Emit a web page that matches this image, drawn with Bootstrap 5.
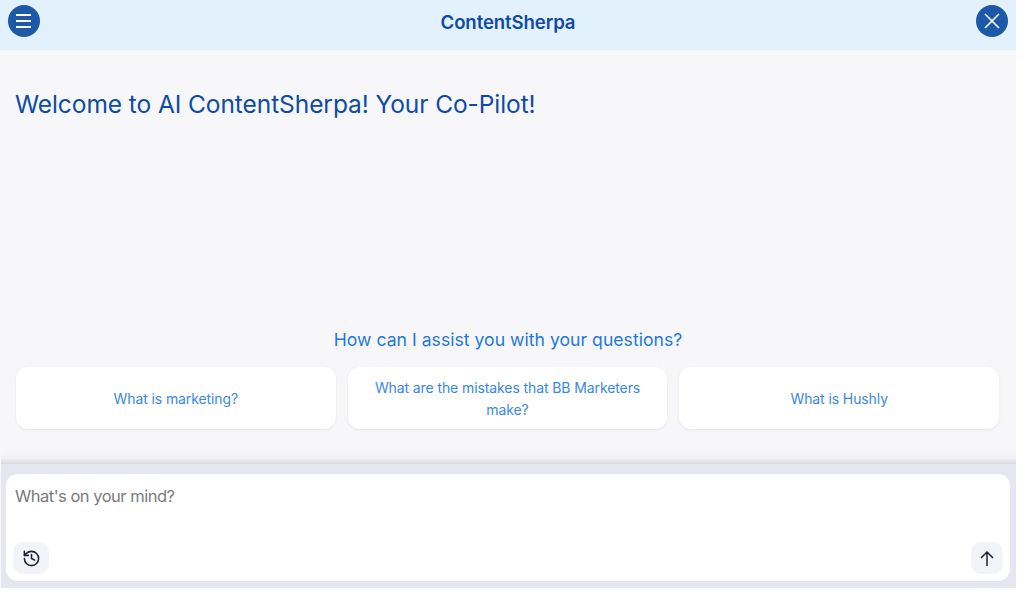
<!DOCTYPE html>
<html lang="en">
<head>
    <meta charset="UTF-8">
    <meta name="viewport" content="width=device-width, initial-scale=1.0">
    <title>ContentSherpa</title>
    <link href="https://cdn.jsdelivr.net/npm/bootstrap@5.3.0/dist/css/bootstrap.min.css" rel="stylesheet">
    <style>
        html, body { height: 100%; }
        body { background: #fff; font-family: Inter, "Liberation Sans", sans-serif; overflow: hidden; }
        .app-shell { width: 1016px; height: 588px; background: #f7f7fa; }
        .top-bar { height: 50px; background: #e3f1fd; padding: 0 8px 8px; }
        .brand-name { font-size: 18.6px; font-weight: 600; color: #0e4ba5; letter-spacing: -0.1px; line-height: 32px; padding-top: 2px; }
        .round-btn { width: 32px; height: 32px; border-radius: 50%; background: #1c5aa8; border: 0; padding: 0; }
        .menu-glyph { margin-right: 1px; }
        .welcome-title { font-size: 24.5px; font-weight: 400; color: #0e4ba5; margin: 38px 0 0 15px; line-height: 32px; letter-spacing: -0.08px; }
        .assist-title { font-size: 17.6px; font-weight: 400; color: #1f78dc; line-height: 24px; margin-bottom: 15px; letter-spacing: 0.02px; }
        .suggest-row { padding: 0 17px 0 16px; gap: 12px; }
        .suggest-card { flex: 1 1 0; height: 62px; background: #fff; border-radius: 12px; color: #3a88e0; font-size: 14px; line-height: 21.5px; text-align: center; padding: 1px 20px 0; box-shadow: 0 1px 3px rgba(0,0,0,.08); letter-spacing: -0.1px; }
        .suggest-pad { padding-bottom: 21px; }
        .fade-strip { height: 14px; margin-left: 1px; background: linear-gradient(to bottom, #f7f7fa 0%, #f1f1f4 60%, #d9d9dd 100%); }
        .composer-wrap { height: 124px; background: #e6e6f0; padding: 10px 6px 7px 5px; margin-left: 1px; }
        .composer { height: 100%; background: #fff; border-radius: 12px; padding: 11px 7px 7px 7px; }
        .composer-input { border: 0; outline: 0; padding: 0 0 0 2px; width: 100%; font-size: 16.5px; line-height: 22px; color: #333; background: transparent; letter-spacing: -0.5px; }
        .composer-input::placeholder { color: #7b7b7b; opacity: 1; }
        .tool-btn { width: 36px; height: 32px; background: #f3f4f9; border: 0; border-radius: 10px; padding: 0; }
        .send-btn { width: 32px; }
    </style>
</head>
<body>
    <div class="app-shell d-flex flex-column">
        <!-- Header -->
        <div class="top-bar d-flex align-items-center justify-content-between">
            <button class="round-btn d-flex align-items-center justify-content-center" aria-label="Menu">
                <svg class="menu-glyph" width="15" height="14" viewBox="0 0 15 14" fill="none" stroke="#fff" stroke-width="1.8"><path d="M0 1H15M0 7H15M0 13H15"/></svg>
            </button>
            <div class="brand-name">ContentSherpa</div>
            <button class="round-btn d-flex align-items-center justify-content-center" aria-label="Close">
                <svg width="16" height="16" viewBox="0 0 16 16" fill="none" stroke="#fff" stroke-width="1.6"><path d="M1 1L15 15M15 1L1 15"/></svg>
            </button>
        </div>

        <!-- Main -->
        <div class="flex-grow-1 d-flex flex-column">
            <h1 class="welcome-title">Welcome to AI ContentSherpa! Your Co-Pilot!</h1>
            <div class="mt-auto suggest-pad">
                <div class="assist-title text-center">How can I assist you with your questions?</div>
                <div class="suggest-row d-flex">
                    <div class="suggest-card d-flex align-items-center justify-content-center">What is marketing?</div>
                    <div class="suggest-card d-flex align-items-center justify-content-center">What are the mistakes that BB Marketers make?</div>
                    <div class="suggest-card d-flex align-items-center justify-content-center">What is Hushly</div>
                </div>
            </div>
            <div class="fade-strip"></div>
        </div>

        <!-- Composer -->
        <div class="composer-wrap">
            <div class="composer d-flex flex-column justify-content-between">
                <input class="composer-input" type="text" placeholder="What's on your mind?">
                <div class="d-flex justify-content-between">
                    <button class="tool-btn d-flex align-items-center justify-content-center" aria-label="History">
                        <svg width="19" height="19" viewBox="0 0 24 24" fill="none" stroke="#1b2233" stroke-width="2" stroke-linecap="round" stroke-linejoin="round"><path d="M3 12a9 9 0 1 0 9-9 9.75 9.75 0 0 0-6.74 2.74L3 8"/><path d="M3 3v5h5"/><path d="M12 7v5l4 2"/></svg>
                    </button>
                    <button class="tool-btn send-btn d-flex align-items-center justify-content-center" aria-label="Send">
                        <svg width="14" height="15" viewBox="0 0 14 15" fill="none" stroke="#1b2233" stroke-width="1.5"><path d="M7 15V1M1 7L7 1L13 7"/></svg>
                    </button>
                </div>
            </div>
        </div>
    </div>
    <script src="https://cdn.jsdelivr.net/npm/bootstrap@5.3.0/dist/js/bootstrap.bundle.min.js"></script>
</body>
</html>
